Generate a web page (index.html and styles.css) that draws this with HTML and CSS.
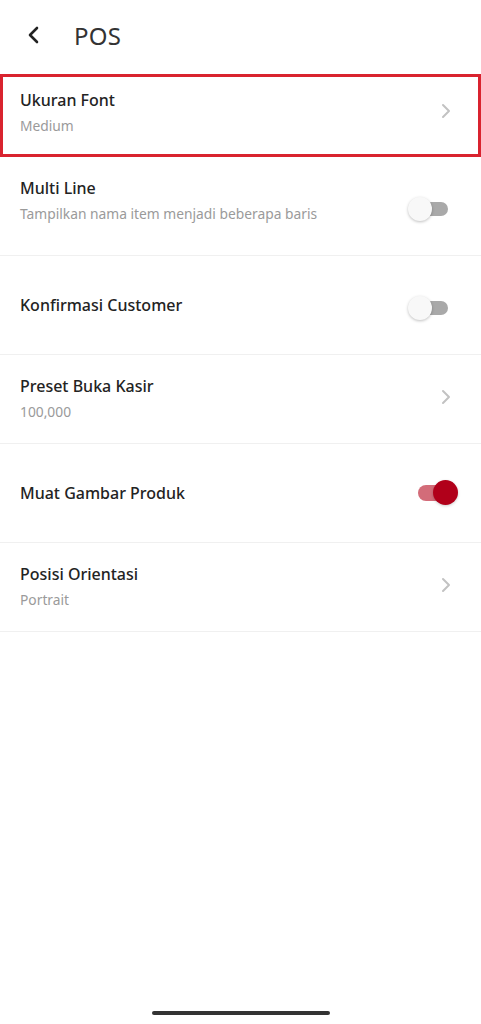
FILE: index.html
```html
<!DOCTYPE html>
<html lang="en">
<head>
    <meta charset="UTF-8">
    <meta name="viewport" content="width=device-width, initial-scale=1.0">
    <title>POS</title>
    <link rel="stylesheet" href="styles.css">
</head>
<body>
    <div class="header">
        <svg class="back" width="14" height="18" viewBox="0 0 14 18">
            <path d="M10 2 L3 9 L10 16" fill="none" stroke="#222" stroke-width="2.6" stroke-linecap="round" stroke-linejoin="round"/>
        </svg>
        <h1>POS</h1>
    </div>

    <div class="list">
        <div class="row selected">
            <div class="text">
                <div class="title">Ukuran Font</div>
                <div class="sub">Medium</div>
            </div>
            <svg class="chevron" width="10" height="16" viewBox="0 0 10 16">
                <path d="M2 2 L8 8 L2 14" fill="none" stroke="#c2c2c2" stroke-width="2" stroke-linecap="round" stroke-linejoin="round"/>
            </svg>
        </div>

        <div class="row tall">
            <div class="text lifted">
                <div class="title">Multi Line</div>
                <div class="sub">Tampilkan nama item menjadi beberapa baris</div>
            </div>
            <div class="switch">
                <span class="track"></span>
                <span class="knob"></span>
            </div>
        </div>

        <div class="row tall">
            <div class="text">
                <div class="title">Konfirmasi Customer</div>
            </div>
            <div class="switch">
                <span class="track"></span>
                <span class="knob"></span>
            </div>
        </div>

        <div class="row">
            <div class="text">
                <div class="title">Preset Buka Kasir</div>
                <div class="sub">100,000</div>
            </div>
            <svg class="chevron" width="10" height="16" viewBox="0 0 10 16">
                <path d="M2 2 L8 8 L2 14" fill="none" stroke="#c2c2c2" stroke-width="2" stroke-linecap="round" stroke-linejoin="round"/>
            </svg>
        </div>

        <div class="row tall">
            <div class="text">
                <div class="title">Muat Gambar Produk</div>
            </div>
            <div class="switch on">
                <span class="track"></span>
                <span class="knob"></span>
            </div>
        </div>

        <div class="row">
            <div class="text">
                <div class="title">Posisi Orientasi</div>
                <div class="sub">Portrait</div>
            </div>
            <svg class="chevron" width="10" height="16" viewBox="0 0 10 16">
                <path d="M2 2 L8 8 L2 14" fill="none" stroke="#c2c2c2" stroke-width="2" stroke-linecap="round" stroke-linejoin="round"/>
            </svg>
        </div>
    </div>

    <div class="home-bar"></div>
</body>
</html>
```

FILE: styles.css
```css
* {
    box-sizing: border-box;
}

body {
    font-family: "Noto Sans", Lato, sans-serif;
    background: #fff;
    color: #222;
    margin: 0;
    height: 100vh;
    display: flex;
    flex-direction: column;
    overflow: hidden;
}

.header {
    height: 74px;
    display: flex;
    align-items: center;
    padding-left: 27px;
    padding-bottom: 4px;
}

.header .back {
    margin-right: 33px;
}

.header h1 {
    margin: 0;
    font-size: 24px;
    font-weight: 400;
    color: #333;
    letter-spacing: 0.3px;
}

.list {
    flex: 1;
}

.row {
    display: flex;
    align-items: center;
    min-height: 89px;
    padding: 0 23px 0 20px;
    border-bottom: 1px solid #f0f0f0;
}

.row.tall {
    min-height: 99px;
}

.row.selected {
    min-height: 83px;
    border: 3px solid #d9232f;
    padding: 0 20px 5px 17px;
}

.text {
    flex: 1;
}

.text.lifted {
    padding-bottom: 10px;
}

.title {
    font-size: 16px;
    font-weight: 500;
    line-height: 26px;
    color: #232323;
}

.sub {
    font-size: 13.8px;
    line-height: 26px;
    color: #9a9a9a;
}

.chevron {
    margin-right: 7px;
    margin-top: -4px;
}

.switch {
    position: relative;
    width: 50px;
    height: 26px;
    margin-top: 6px;
}

.switch .track {
    position: absolute;
    left: 6px;
    right: 10px;
    top: 6px;
    height: 14px;
    border-radius: 7px;
    background: #a9a9a9;
}

.switch .knob {
    position: absolute;
    left: 0;
    top: 1px;
    width: 24px;
    height: 24px;
    border-radius: 50%;
    background: #f8f8f8;
    box-shadow: 0 1px 3px rgba(0, 0, 0, 0.25);
}

.switch.on {
    margin-top: 0;
}

.switch.on .track {
    left: 10px;
    right: 6px;
    top: 5px;
    height: 16px;
    border-radius: 8px;
    background: #d36c79;
}

.switch.on .knob {
    left: auto;
    right: 0;
    width: 25px;
    height: 25px;
    top: 0;
    background: #b1001a;
    box-shadow: 0 1px 3px rgba(0, 0, 0, 0.2);
}

.home-bar {
    width: 178px;
    height: 4px;
    border-radius: 2px;
    background: #333;
    margin: 0 auto 9px 152px;
}
```
